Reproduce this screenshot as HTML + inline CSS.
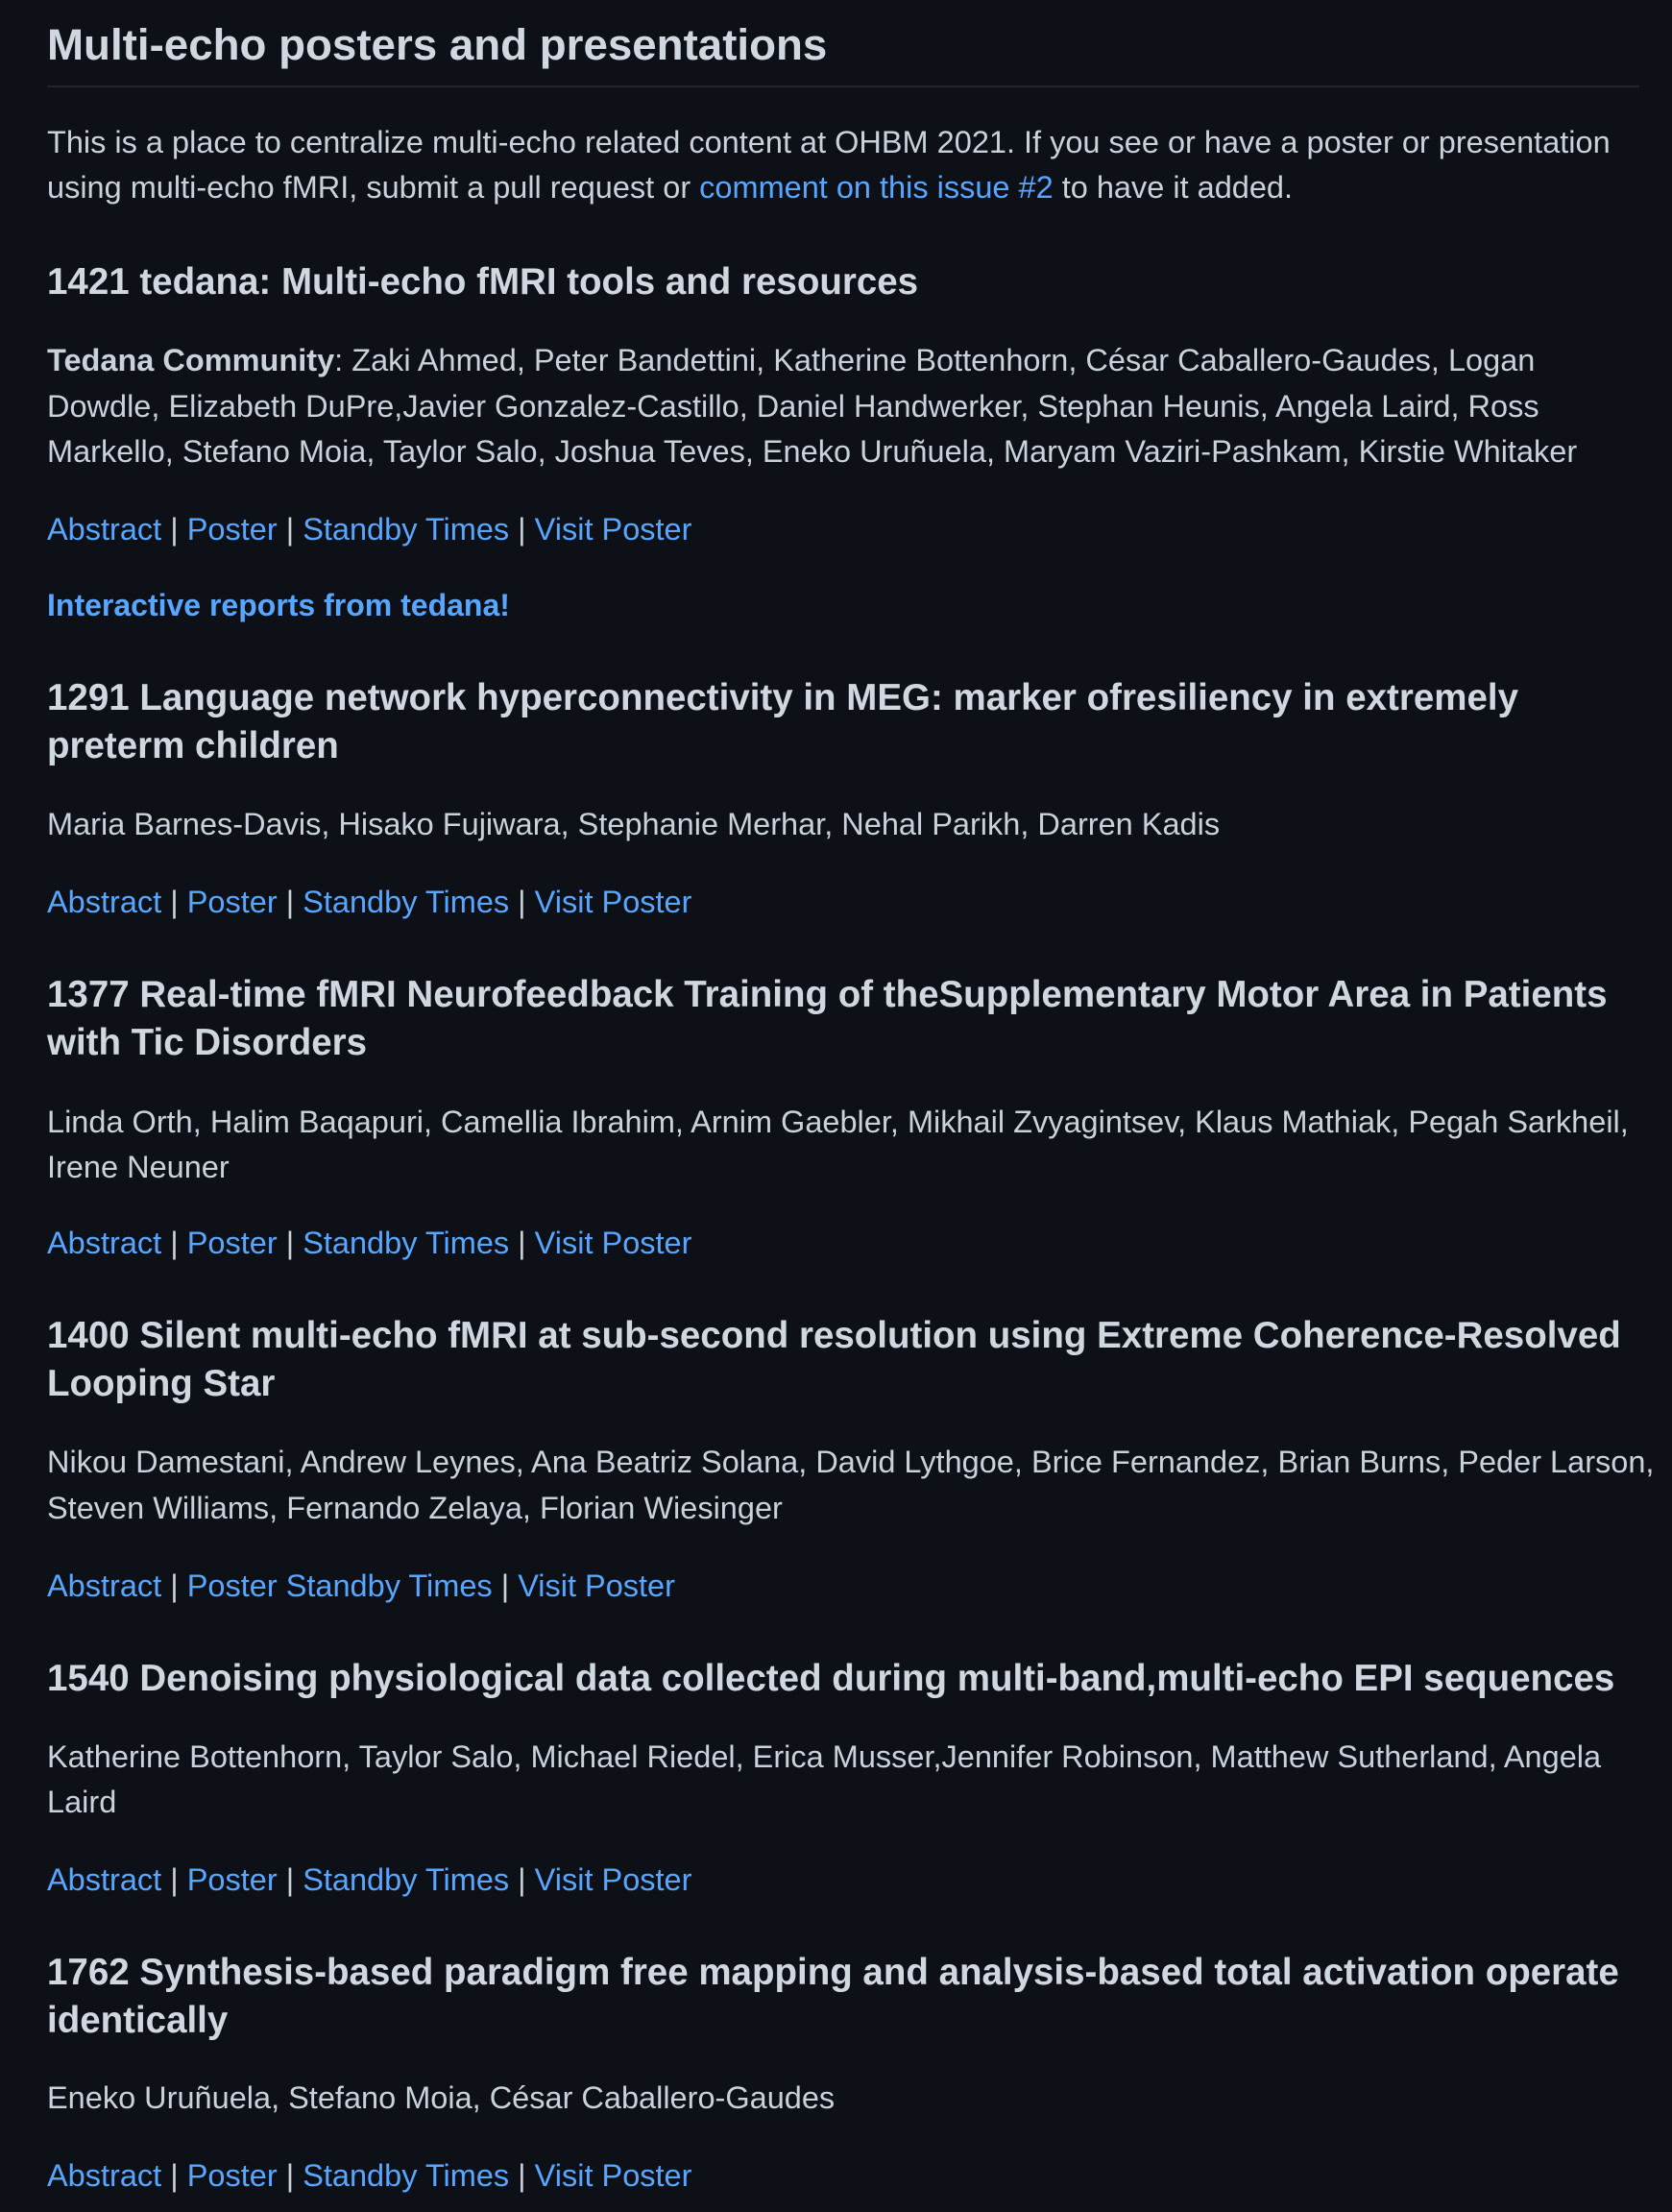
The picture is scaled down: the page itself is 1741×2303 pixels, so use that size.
<!DOCTYPE html>
<html><head><meta charset="utf-8"><style>
html,body{margin:0;padding:0;background:#0d1117;width:1741px;height:2303px;overflow:hidden}
body{font-family:"Liberation Sans",sans-serif;color:#c9d1d9;position:relative}
.l{position:absolute;left:49px;white-space:nowrap;font-size:32.5px;height:48px;line-height:48px}
.h{font-weight:bold;font-size:38.5px;color:#d0d7de;height:50px;line-height:50px}
a{color:#58a6ff;text-decoration:none}
b{font-weight:bold}
.hr{position:absolute;left:49px;width:1658px;top:89px;height:2px;background:#21262d}
</style></head><body>
<div class="l h" style="top:20px;font-size:45.7px;height:54px;line-height:54px">Multi-echo posters and presentations</div>
<div class="hr"></div>
<div class="l" style="top:124px">This is a place to centralize multi-echo related content at OHBM 2021. If you see or have a poster or presentation</div>
<div class="l" style="top:171px">using multi-echo fMRI, submit a pull request or <a>comment on this issue #2</a> to have it added.</div>

<div class="l h" style="top:269px">1421 tedana: Multi-echo fMRI tools and resources</div>
<div class="l" style="top:351px"><b>Tedana Community</b>: Zaki Ahmed, Peter Bandettini, Katherine Bottenhorn, César Caballero-Gaudes, Logan</div>
<div class="l" style="top:399px">Dowdle, Elizabeth DuPre,Javier Gonzalez-Castillo, Daniel Handwerker, Stephan Heunis, Angela Laird, Ross</div>
<div class="l" style="top:446px">Markello, Stefano Moia, Taylor Salo, Joshua Teves, Eneko Uruñuela, Maryam Vaziri-Pashkam, Kirstie Whitaker</div>
<div class="l" style="top:527px"><a>Abstract</a> | <a>Poster</a> | <a>Standby Times</a> | <a>Visit Poster</a></div>
<div class="l" style="top:606px;font-size:32px"><a><b>Interactive reports from tedana!</b></a></div>

<div class="l h" style="top:702px">1291 Language network hyperconnectivity in MEG: marker ofresiliency in extremely</div>
<div class="l h" style="top:752px">preterm children</div>
<div class="l" style="top:834px">Maria Barnes-Davis, Hisako Fujiwara, Stephanie Merhar, Nehal Parikh, Darren Kadis</div>
<div class="l" style="top:915px"><a>Abstract</a> | <a>Poster</a> | <a>Standby Times</a> | <a>Visit Poster</a></div>

<div class="l h" style="top:1011px">1377 Real-time fMRI Neurofeedback Training of theSupplementary Motor Area in Patients</div>
<div class="l h" style="top:1061px">with Tic Disorders</div>
<div class="l" style="top:1144px">Linda Orth, Halim Baqapuri, Camellia Ibrahim, Arnim Gaebler, Mikhail Zvyagintsev, Klaus Mathiak, Pegah Sarkheil,</div>
<div class="l" style="top:1191px">Irene Neuner</div>
<div class="l" style="top:1270px"><a>Abstract</a> | <a>Poster</a> | <a>Standby Times</a> | <a>Visit Poster</a></div>

<div class="l h" style="top:1366px">1400 Silent multi-echo fMRI at sub-second resolution using Extreme Coherence-Resolved</div>
<div class="l h" style="top:1416px">Looping Star</div>
<div class="l" style="top:1498px">Nikou Damestani, Andrew Leynes, Ana Beatriz Solana, David Lythgoe, Brice Fernandez, Brian Burns, Peder Larson,</div>
<div class="l" style="top:1546px">Steven Williams, Fernando Zelaya, Florian Wiesinger</div>
<div class="l" style="top:1627px"><a>Abstract</a> | <a>Poster Standby Times</a> | <a>Visit Poster</a></div>

<div class="l h" style="top:1723px">1540 Denoising physiological data collected during multi-band,multi-echo EPI sequences</div>
<div class="l" style="top:1805px">Katherine Bottenhorn, Taylor Salo, Michael Riedel, Erica Musser,Jennifer Robinson, Matthew Sutherland, Angela</div>
<div class="l" style="top:1852px">Laird</div>
<div class="l" style="top:1933px"><a>Abstract</a> | <a>Poster</a> | <a>Standby Times</a> | <a>Visit Poster</a></div>

<div class="l h" style="top:2029px">1762 Synthesis-based paradigm free mapping and analysis-based total activation operate</div>
<div class="l h" style="top:2079px">identically</div>
<div class="l" style="top:2160px">Eneko Uruñuela, Stefano Moia, César Caballero-Gaudes</div>
<div class="l" style="top:2241px"><a>Abstract</a> | <a>Poster</a> | <a>Standby Times</a> | <a>Visit Poster</a></div>
</body></html>
